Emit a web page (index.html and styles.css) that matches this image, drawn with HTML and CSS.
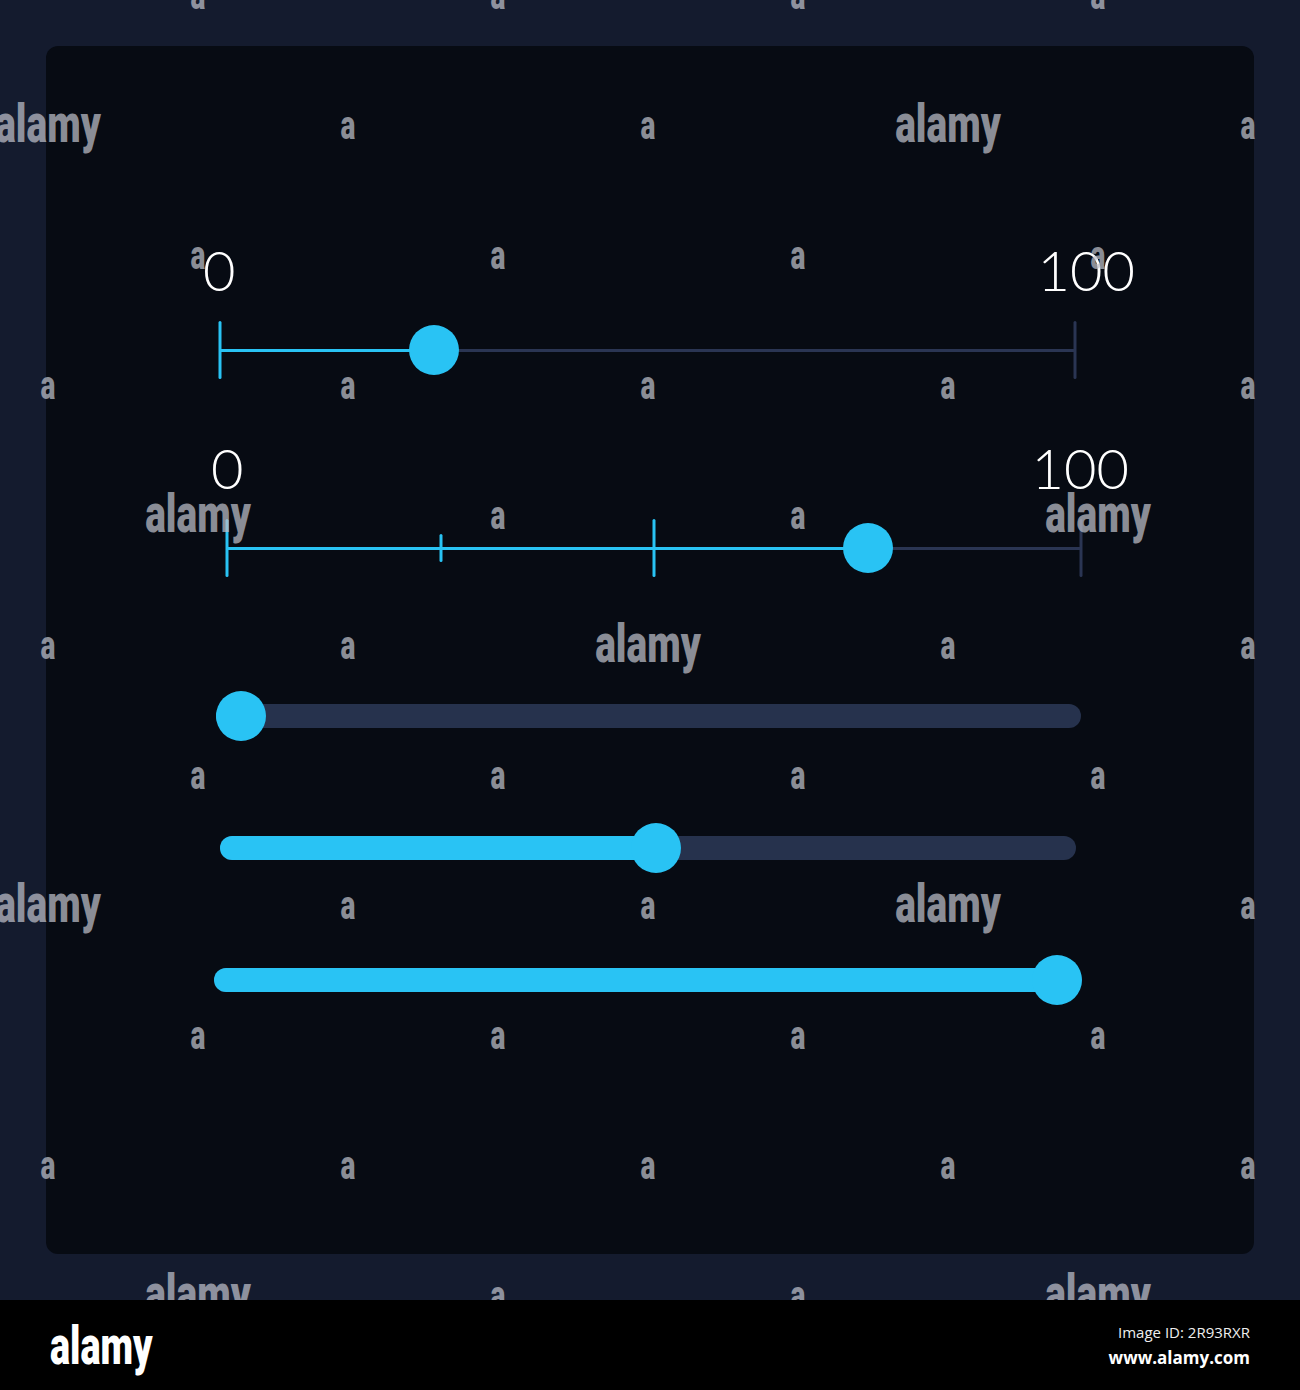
FILE: index.html
```html
<!DOCTYPE html>
<html>
<head>
  <title>Range Sliders</title>
  <link rel="stylesheet" href="styles.css">
</head>
<body>
  <div class="frame">
    <div class="card">

      <!-- line slider with end ticks -->
      <div class="slider slider-1">
        <div class="scale scale-1"><span>0</span><span>100</span></div>
        <div class="rail" style="--v: .25">
          <div class="rail-line"></div>
          <div class="rail-fill"></div>
          <span class="tick on" style="left: 0%"></span>
          <span class="tick" style="left: 100%"></span>
          <span class="knob"></span>
        </div>
      </div>

      <!-- line slider with steps -->
      <div class="slider slider-2">
        <div class="scale scale-2"><span>0</span><span>100</span></div>
        <div class="rail" style="--v: .75">
          <div class="rail-line"></div>
          <div class="rail-fill"></div>
          <span class="tick on" style="left: 0%"></span>
          <span class="tick minor on" style="left: 25%"></span>
          <span class="tick on" style="left: 50%"></span>
          <span class="tick" style="left: 100%"></span>
          <span class="knob"></span>
        </div>
      </div>

      <!-- thick sliders -->
      <div class="slider slider-3">
        <div class="bar" style="--v: 0">
          <div class="bar-track"><div class="bar-fill"></div></div>
          <span class="knob"></span>
        </div>
      </div>

      <div class="slider slider-4">
        <div class="bar" style="--v: .51">
          <div class="bar-track"><div class="bar-fill"></div></div>
          <span class="knob"></span>
        </div>
      </div>

      <div class="slider slider-5">
        <div class="bar" style="--v: 1">
          <div class="bar-track"><div class="bar-fill"></div></div>
          <span class="knob"></span>
        </div>
      </div>

    </div>
  </div>

  <div class="watermarks" id="watermarks"></div>

  <footer class="footer">
    <span class="logo">alamy</span>
    <div class="credits">
      <span class="image-id">Image ID: 2R93RXR</span>
      <span class="site">www.alamy.com</span>
    </div>
  </footer>

<script>
// Fill the watermark grid: a checkerboard of marks, some of them full words
const marks = document.getElementById('watermarks');
const big = ['1-0', '1-6', '4-1', '4-7', '5-4', '7-0', '7-6', '10-1', '10-7'];

for (let row = 0; row < 11; row++) {
  for (let col = 0; col < 9; col++) {
    const cell = document.createElement('span');
    cell.className = 'mark';
    if ((row + col) % 2) {
      if (big.includes(row + '-' + col)) {
        cell.className = 'mark mark-big';
        cell.textContent = 'alamy';
      } else {
        cell.textContent = 'a';
      }
    }
    marks.appendChild(cell);
  }
}
</script>
</body>
</html>
```

FILE: styles.css
```css
body {
  margin: 0;
  position: relative;
  overflow: hidden;
  background-color: #141b2e;
  font-family: Lato, "Liberation Sans", sans-serif;
}

.frame {
  padding: 46px;
}

.card {
  height: 1208px;
  box-sizing: border-box;
  padding-top: 196px;
  border-radius: 12px;
  background-color: #070b13;
}

/* labels above the line sliders */
.scale {
  display: flex;
  justify-content: space-between;
  margin-bottom: 23px;
  color: #ffffff;
  font-size: 56px;
  font-weight: 300;
  line-height: 56px;
}

.scale-1 {
  margin-left: -17px;
  margin-right: -60px;
}

.scale-2 {
  margin-left: -16px;
  margin-right: -48px;
}

.slider-1 {
  margin: 0 179px 0 174px;
}

.slider-2 {
  margin: 61px 173px 0 181px;
}

.slider-3 {
  margin: 114px 173px 0 170px;
}

.slider-4 {
  margin: 82px 178px 0 174px;
}

.slider-5 {
  margin: 82px 172px 0 168px;
}

/* thin line slider */
.rail {
  position: relative;
  height: 58px;
}

.rail-line,
.rail-fill {
  position: absolute;
  left: 0;
  top: 28px;
  height: 3px;
  background-color: #2a3553;
}

.rail-line {
  right: 0;
}

.rail-fill {
  width: calc(100% * var(--v));
  background-color: #29c3f4;
}

.tick {
  position: absolute;
  top: 0;
  width: 3px;
  height: 58px;
  border-radius: 2px;
  background-color: #2a3553;
  transform: translateX(-50%);
}

.tick.on {
  background-color: #29c3f4;
}

.tick.minor {
  top: 15px;
  height: 28px;
}

.rail .knob {
  left: calc(100% * var(--v));
}

/* thick pill slider */
.bar {
  position: relative;
  height: 50px;
}

.bar-track {
  position: absolute;
  left: 0;
  right: 0;
  top: 13px;
  height: 24px;
  border-radius: 12px;
  overflow: hidden;
  background-color: #26324d;
}

.bar-fill {
  height: 100%;
  width: calc(25px + (100% - 50px) * var(--v));
  background-color: #29c3f4;
}

.bar .knob {
  left: calc(25px + (100% - 50px) * var(--v));
}

.knob {
  position: absolute;
  top: 50%;
  width: 50px;
  height: 50px;
  border-radius: 50%;
  background-color: #29c3f4;
  transform: translate(-50%, -50%);
}

/* stock watermark layer */
.watermarks {
  position: absolute;
  top: -67px;
  left: -27px;
  z-index: 1;
  display: grid;
  grid-template-columns: repeat(9, 150px);
  grid-auto-rows: 130px;
  pointer-events: none;
}

.mark {
  display: flex;
  align-items: center;
  justify-content: center;
  color: rgba(190, 192, 202, 0.72);
  font-family: Roboto, "Liberation Sans", sans-serif;
  font-weight: 900;
  font-size: 40px;
  line-height: 40px;
  transform: translateY(-2px) scaleX(0.7);
}

.mark-big {
  font-size: 54px;
  line-height: 54px;
  transform: translateY(-4px) scaleX(0.72);
}

.footer {
  position: relative;
  z-index: 2;
  height: 90px;
  box-sizing: border-box;
  padding: 0 50px;
  display: flex;
  align-items: center;
  justify-content: space-between;
  background-color: #000000;
  color: #ffffff;
}

.logo {
  font-family: Roboto, "Liberation Sans", sans-serif;
  font-weight: 900;
  font-size: 54px;
  transform: scaleX(0.7);
  transform-origin: left center;
}

.credits {
  display: flex;
  flex-direction: column;
  align-items: flex-end;
  gap: 4px;
  font-family: "Open Sans", sans-serif;
}

.image-id {
  font-size: 15px;
  color: #eeeeee;
}

.site {
  font-size: 17px;
  font-weight: 700;
}
```
